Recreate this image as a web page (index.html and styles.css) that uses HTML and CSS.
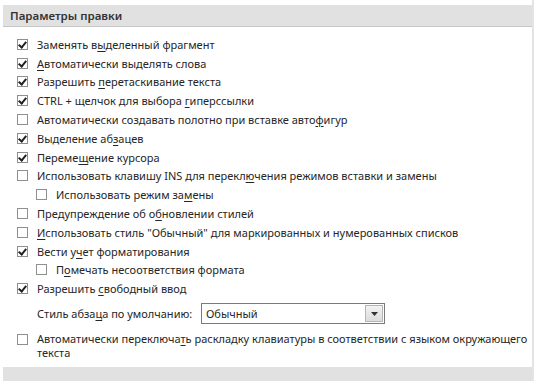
FILE: index.html
```html
<!DOCTYPE html>
<html lang="ru">
<head>
  <meta charset="UTF-8">
  <title>Параметры правки</title>
  <link rel="stylesheet" href="styles.css">
</head>
<body>
  <div class="panel">
    <!-- заголовок раздела -->
    <div class="section-title">Параметры правки</div>
    <div class="options">
      <label class="opt"><span class="box checked"></span><span>Заменять в<u>ы</u>деленный фрагмент</span></label>
      <label class="opt"><span class="box checked"></span><span><u>А</u>втоматически выделять слова</span></label>
      <label class="opt"><span class="box checked"></span><span>Разрешить <u>п</u>еретаскивание текста</span></label>
      <label class="opt"><span class="box checked"></span><span>CTRL + щелчок для выбора <u>г</u>иперссылки</span></label>
      <label class="opt"><span class="box"></span><span>Автоматически создавать полотно при вставке авто<u>ф</u>игур</span></label>
      <label class="opt"><span class="box checked"></span><span>Выделение аб<u>з</u>ацев</span></label>
      <label class="opt"><span class="box checked"></span><span>Переме<u>щ</u>ение курсора</span></label>
      <label class="opt"><span class="box"></span><span>Использовать клавишу INS для перекл<u>ю</u>чения режимов вставки и замены</span></label>
      <label class="opt sub"><span class="box"></span><span>Использовать режим за<u>м</u>ены</span></label>
      <label class="opt"><span class="box"></span><span>Предупреждение об о<u>б</u>новлении стилей</span></label>
      <label class="opt"><span class="box"></span><span><u>И</u>спользовать стиль "Обычный" для маркированных и нумерованных списков</span></label>
      <label class="opt"><span class="box checked"></span><span>Вести у<u>ч</u>ет форматирования</span></label>
      <label class="opt sub"><span class="box"></span><span>П<u>о</u>мечать несоответствия формата</span></label>
      <label class="opt"><span class="box checked"></span><span>Разрешить <u>с</u>вободный ввод</span></label>
      <div class="style-row">
        <span class="style-label">Стиль абза<u>ц</u>а по умолчанию:</span>
        <div class="select">
          <span class="select-value">Обычный</span>
          <span class="select-btn">
            <svg width="7" height="4" viewBox="0 0 7 4"><path d="M0 0h7L3.5 4z" fill="#333"/></svg>
          </span>
        </div>
      </div>
      <label class="opt multi"><span class="box"></span><span>Автоматически переключа<u>т</u>ь раскладку клавиатуры в соответствии с языком окружающего текста</span></label>
    </div>
    <div class="footer-band"></div>
  </div>
</body>
</html>
```

FILE: styles.css
```css
* { margin: 0; padding: 0; box-sizing: border-box; }
body {
  font-family: "Noto Sans", "Open Sans", sans-serif;
  font-size: 11px;
  color: #262626;
  background: #fff;
}
u { text-decoration-thickness: 1px; text-underline-offset: 2px; }
/* рамка панели */
.panel {
  width: 534px;
  height: 381px;
  padding: 5px 0 0 3px;
  border-right: 2px solid #e4e4e4;
  display: flex;
  flex-direction: column;
}
.section-title {
  width: 529px;
  height: 22px;
  background: #e1e1e1;
  border-bottom: 1px solid #c6c6c6;
  padding: 3px 0 0 7px;
  font-size: 11.5px;
  font-weight: 600;
  color: #333;
}
/* список флажков */
.options {
  display: flex;
  flex-direction: column;
  padding: 8px 0 0 14px;
  flex: 1;
}
.opt {
  display: flex;
  align-items: center;
  gap: 9px;
  height: 18.8px;
}
.opt.sub { padding-left: 19px; }
.opt.multi {
  align-items: flex-start;
  height: auto;
  margin-top: 3px;
  width: 515px;
  line-height: 14px;
}
.opt.multi .box { margin-top: 2px; }
.box {
  width: 11px;
  height: 11px;
  flex: none;
  border: 1px solid #8e8f8f;
  background: #fff;
  position: relative;
}
.box.checked::after {
  content: "";
  position: absolute;
  left: 2px;
  top: 0;
  width: 3px;
  height: 6px;
  border: solid #222;
  border-width: 0 2px 2px 0;
  transform: rotate(40deg);
}
/* выбор стиля абзаца */
.style-row {
  display: flex;
  align-items: center;
  padding-left: 20px;
  height: 31px;
}
.style-label { width: 164px; }
.select {
  width: 184px;
  height: 21px;
  border: 1px solid #7a7a7a;
  display: flex;
  align-items: center;
  background: #fff;
}
.select-value { flex: 1; padding-left: 4px; }
.select-btn {
  width: 18px;
  height: 17px;
  margin-right: 1px;
  background: linear-gradient(#f2f2f2, #dcdcdc);
  border: 1px solid #b5b5b5;
  display: flex;
  align-items: center;
  justify-content: center;
}
.footer-band {
  width: 529px;
  height: 14px;
  background: #e1e1e1;
  flex: none;
}
```
